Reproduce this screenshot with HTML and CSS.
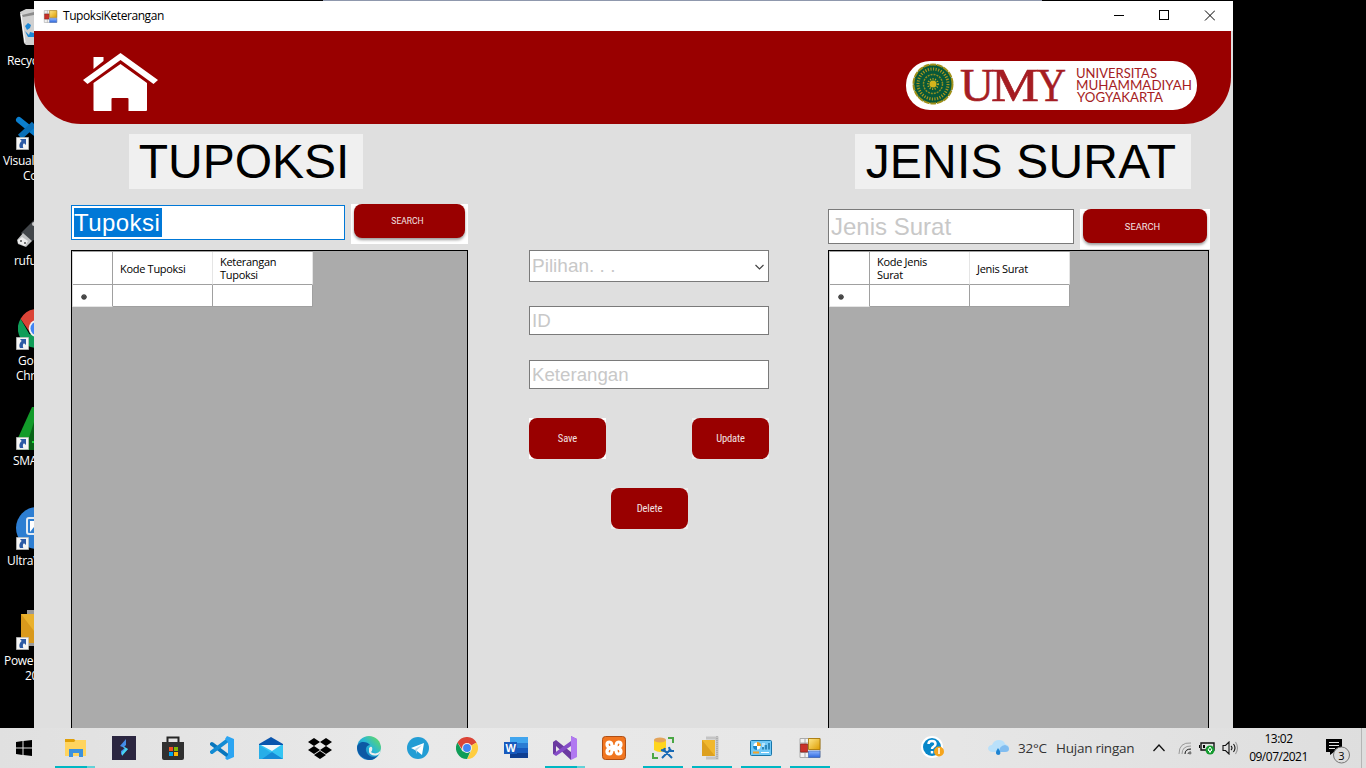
FILE: index.html
```html
<!DOCTYPE html>
<html lang="id">
<head>
<meta charset="utf-8">
<title>TupoksiKeterangan</title>
<link rel="stylesheet" href="styles.css">
</head>
<body>
<svg class="defs" width="0" height="0">
  <defs>
    <linearGradient id="gold" x1="0" y1="0" x2="1" y2="1"><stop offset="0" stop-color="#ffe88a"/><stop offset="1" stop-color="#dd9c00"/></linearGradient>
    <linearGradient id="blue" x1="0" y1="0" x2="0" y2="1"><stop offset="0" stop-color="#8db5ff"/><stop offset="1" stop-color="#2f68dd"/></linearGradient>
    <linearGradient id="edge" x1="1" y1="0" x2="0" y2="1"><stop offset="0" stop-color="#6de04e"/><stop offset=".45" stop-color="#28b7d5"/><stop offset="1" stop-color="#0d62bd"/></linearGradient>
    <symbol id="shortcut" viewBox="0 0 13 13"><path fill="#f5f5f5" stroke="#aaa" stroke-width=".6" d="M.3.3h12.4v12.4H.3z"/><path fill="#2c5aa5" d="M4 2h6v6L8 6.300C6.800 7.200 6.500 9 7.300 11H4C2.500 8 4 5.500 5.700 4z"/></symbol>
    <symbol id="form" viewBox="0 0 24 24"><path fill="#f3f3f3" stroke="#aaa" d="M2 2.500h20v19H2zM7 2v20M2 7h8M2 16.500h20"/><path fill="url(#gold)" stroke="#a97808" stroke-width=".9" d="M10.500 2.500h11.500v11h-11.500z"/><path fill="#c93129" stroke="#86201b" stroke-width=".7" d="M2.500 8H9.500v8H2.500z"/><path fill="url(#blue)" stroke="#4268b0" stroke-width=".7" d="M10.500 15h11.500v6.500h-11.500z"/></symbol>
    <symbol id="chrome" viewBox="0 0 24 24"><path fill="#db4437" d="M12 12 1.600 6A12 12 0 0 1 22.400 6z"/><path fill="#ffcd40" d="M12 12l10.400-6A12 12 0 0 1 12 24l4.500-9z"/><path fill="#0f9d58" d="M1.600 6 7 15.500 16 15 12 24A12 12 0 0 1 1.600 6z"/><path fill="#db4437" d="M1.600 6h20.800L12 7 7 14z"/><circle cx="12" cy="12" r="5.400" fill="#f3f3f3"/><circle cx="12" cy="12" r="4.300" fill="#4285f4"/></symbol>
  </defs>
</svg>

<div class="desktop">
  <div class="shortcuts">
    <div class="shortcut"><svg width="34" height="53"><path fill="#d0d0d0" d="M20 12l6-3h8v36h-8l-2-2z"/><path fill="#8c8c8c" d="M22 15l12-3v3l-11 2z"/><path fill="none" stroke="#fff" d="M21 14l4 28"/><path fill="#1b87d6" d="M25 26l3-3 3 2-1 3-3 2zM25 31l4 4 1-3 4 1v4h-6z"/></svg><span class="r1">Recyc</span></div>
    <div class="shortcut"><svg width="34" height="53"><path stroke="#0b7fcf" stroke-width="6" stroke-linecap="round" d="M19 20l16 13"/><path stroke="#096fb8" stroke-width="6" d="M20 37l14-13"/><use href="#shortcut" x="16" y="37" width="13" height="13"/></svg><span class="r2">Visual</span><span class="r2b">Co</span></div>
    <div class="shortcut"><svg width="34" height="53"><path fill="#42464a" d="M21 33l13-13v20l-5 2z"/><path fill="#bfc1c2" d="M17 40l6-7 9 8-6 6-8-3z"/><path fill="#eee" d="M18 40l4-3 6 4-3 5-7-3z"/><path fill="#777" d="M20 40h2v2h-2zM24 42h2v2h-2z"/><circle cx="34" cy="24" r="2" fill="#ccc"/></svg><span class="r3">rufu</span></div>
    <div class="shortcut"><svg width="34" height="53"><use href="#chrome" x="18" y="9" width="39" height="39"/><use href="#shortcut" x="16" y="37" width="13" height="13"/></svg><span class="r4">Go</span><span class="r4b">Chr</span></div>
    <div class="shortcut"><svg width="34" height="53"><path fill="#129b2a" d="M32 7h2v43H18V38z"/><path fill="#076417" d="M34 22v28H25z"/><path fill="#21d63d" d="M32 41h2v2h-2z"/><use href="#shortcut" x="16" y="37" width="13" height="13"/></svg><span class="r5">SMA</span></div>
    <div class="shortcut"><svg width="34" height="53"><circle cx="37" cy="28" r="21" fill="#2d7ed2"/><rect x="27" y="18" width="20" height="16" rx="2" fill="#2d7ed2" stroke="#e2ebf4" stroke-width="2"/><path fill="#fff" d="M30 21h4v6l-4 5z"/><use href="#shortcut" x="16" y="37" width="13" height="13"/></svg><span class="r1">UltraV</span></div>
    <div class="shortcut"><svg width="34" height="53"><path fill="#999" d="M27 10h7v36h-7z"/><path fill="#eab12d" d="M21 14h13v29H21z"/><path fill="#d9991c" d="M21 14l13 17v12H21z"/><use href="#shortcut" x="16" y="37" width="13" height="13"/></svg><span class="r7">Powe</span><span class="r7b">20</span></div>
  </div>

  <main class="window">
    <div class="titlebar">
      <svg width="15" height="15"><use href="#form" width="15" height="15"/></svg>
      <span>TupoksiKeterangan</span>
      <svg class="controls" width="104" height="30" fill="none" stroke="#000" shape-rendering="crispEdges"><path d="M3 14.500h10M48.500 9.500h9v9h-9z"/><path shape-rendering="auto" d="M94 9.500l10 10M104 9.500l-10 10"/></svg>
    </div>
    <header class="banner">
      <svg class="home" width="76" height="60" viewBox=".5 0 76 60" fill="#fff"><path d="M11 4h10v4l-10 8zM38 0l37.500 27-4.500 4L38 7 5 31l-4.500-4z"/><path d="M38 11l26.500 19v27q0 1-1 1H46V46q0-1-1-1H30q-1 0-1 1v12H12q-1 0-1-1V30z"/></svg>
      <div class="logo">
        <svg width="291" height="48">
          <circle cx="27" cy="23" r="19.500" fill="#075839" stroke="#a09018" stroke-width="2" stroke-dasharray="6 .8"/>
          <circle cx="27" cy="23" r="15" fill="none" stroke="#a6951f" stroke-width="3" stroke-dasharray="1.200 1.400"/>
          <circle cx="27" cy="23" r="9.500" fill="none" stroke="#8f8d20" stroke-width="1.500" stroke-dasharray="2 1"/>
          <circle cx="27" cy="23" r="3.500" fill="#d5b51c"/><circle cx="27" cy="23" r="5" fill="none" stroke="#c5aa1c" stroke-width="2" stroke-dasharray="1 1.500"/>
          <g class="umy"><text x="54" y="40" textLength="34" lengthAdjust="spacingAndGlyphs">U</text><text x="85" y="40" textLength="48" lengthAdjust="spacingAndGlyphs">M</text><text x="131" y="40" textLength="29" lengthAdjust="spacingAndGlyphs">Y</text></g>
          <g class="uni"><text x="170" y="17" textLength="81" lengthAdjust="spacingAndGlyphs">UNIVERSITAS</text><text x="170" y="29" textLength="116" lengthAdjust="spacingAndGlyphs">MUHAMMADIYAH</text><text x="171" y="41" textLength="86" lengthAdjust="spacingAndGlyphs">YOGYAKARTA</text></g>
        </svg>
      </div>
    </header>
    <div class="content">
      <section class="panel left">
        <h1>TUPOKSI</h1>
        <div class="search-row"><div class="field big focused"><mark>Tupoksi</mark></div><div class="search"><button>SEARCH</button></div></div>
        <div class="grid">
          <div class="table"><i></i><b>Kode Tupoksi</b><b>Keterangan<br>Tupoksi</b><i class="new"><svg width="6" height="6"><path stroke="#444" stroke-width="1.300" d="M3 0v6M0 3h6M1 1l4 4M5 1L1 5"/></svg></i><i></i><i></i></div>
        </div>
      </section>
      <section class="form">
        <div class="field select">Pilihan. . .<svg width="9" height="6" fill="none" stroke="#444" stroke-width="1.200"><path d="M.5 1l4 4 4-4"/></svg></div>
        <div class="field id">ID</div>
        <div class="field ket">Keterangan</div>
        <div class="actions"><span class="action white"><button>Save</button></span><span class="action"><button>Update</button></span></div>
        <div class="actions center"><span class="action"><button>Delete</button></span></div>
      </section>
      <section class="panel right">
        <h1>JENIS SURAT</h1>
        <div class="search-row"><div class="field big">Jenis Surat</div><div class="search"><button>SEARCH</button></div></div>
        <div class="grid">
          <div class="table"><i></i><b>Kode Jenis<br>Surat</b><b>Jenis Surat</b><i class="new"><svg width="6" height="6"><path stroke="#444" stroke-width="1.300" d="M3 0v6M0 3h6M1 1l4 4M5 1L1 5"/></svg></i><i></i><i></i></div>
        </div>
      </section>
    </div>
  </main>
  <div class="behind"></div>
</div>

<footer class="taskbar">
  <div class="start"><svg width="16" height="16"><path d="M0 2l6.500-1v6.500H0zM7.500 1L16 0v7.500H7.500zM0 8.500h6.500V15L0 14zM7.500 8.500H16V16l-8.500-1z"/></svg></div>
  <div class="app running split"><svg width="24" height="24"><path fill="#e0a008" d="M2 3h9l2 2-2 3H2z"/><path fill="#ffd45e" d="M2 6h9l2-2h10v16H2z"/><path fill="#3b91dd" d="M6 13h14v8h-4v-4h-6v4H6z"/></svg></div>
  <div class="app"><svg width="24" height="24"><path fill="#2b2640" d="M0 0h24v24H0z"/><path fill="#438ce8" d="M14 3v6l-3 3 5 1-7 6v-4l4-3-5-2z"/><path fill="#48d4ef" d="M11 10l5 3-6 7v-4l3-3z"/></svg></div>
  <div class="app"><svg width="24" height="24"><path fill="none" stroke="#252525" stroke-width="2" d="M6.500 7V1.500h11V7"/><path fill="#303030" d="M1 6h22v16q0 2-2 2H3q-2 0-2-2z"/><path fill="#f25022" d="M8 11h4v4H8z"/><path fill="#7fba00" d="M13 11h4v4h-4z"/><path fill="#00a4ef" d="M8 16h4v4H8z"/><path fill="#ffb900" d="M13 16h4v4h-4z"/></svg></div>
  <div class="app"><svg width="24" height="24"><path stroke="#0876bd" stroke-width="4" stroke-linecap="round" d="M2 8l16 12"/><path stroke="#138bd3" stroke-width="4" stroke-linecap="round" d="M2 16L18 4"/><path fill="#2ca5f2" d="M17 0l7 3v18l-7 3-2-2 3-3V6l-3-3z"/></svg></div>
  <div class="app"><svg width="24" height="24"><path fill="#0a55ad" d="M0 8l12-7 12 7v3H0z"/><path fill="#35c5f3" d="M0 9h24v14H0z"/><path fill="#f5f7fa" d="M2 9h20l-9 6z"/><path fill="#27aee8" d="M0 9l22 14H0z"/><path fill="#158bd6" d="M13 16l11 7H3z"/></svg></div>
  <div class="app"><svg width="24" height="22"><path d="M6 1l6 4-6 4-6-4zM18 1l6 4-6 4-6-4zM6 9l6 4-6 4-6-4zM18 9l6 4-6 4-6-4zM12 14l6 4-6 4-6-4z"/></svg></div>
  <div class="app"><svg width="24" height="24"><circle cx="12" cy="12" r="12" fill="url(#edge)"/><path fill="#0c59a4" d="M0 12C1 4 10 5 13 9 7 10 8 17 13 20c4 2 7 0 8-1-3 5-8 6-12 4Q1 20 0 12z"/><path fill="#ededed" d="M12 12c4-4 4 3 2 4 4 3 9 1 10-3l-1 4c-3 4-10 3-11-1z"/></svg></div>
  <div class="app"><svg width="22" height="22"><circle cx="11" cy="11" r="11" fill="#239dd4"/><path fill="#fff" d="M4 11l13-5-2 12-5-4z"/><path fill="#b9d8e8" d="M8 12l7-4-5 5v4z"/></svg></div>
  <div class="app"><svg width="22" height="22"><use href="#chrome" width="22" height="22"/></svg></div>
  <div class="app"><svg width="24" height="24"><path fill="#41a5ee" d="M6 1h18v6H6z"/><path fill="#2b7cd3" d="M6 7h18v5H6z"/><path fill="#185abd" d="M6 12h18v5H6z"/><path fill="#103f91" d="M6 17h18v5H6z"/><path fill="#185abd" d="M0 6h13v12H0z"/><text x="1.500" y="16" class="w">W</text></svg></div>
  <div class="app running split"><svg width="24" height="24"><path fill="#6b3aa0" d="M0 6l3-2 15 12v8L3 10v8H0z"/><path fill="#854cc7" d="M0 18l18-13V0L24 3v3L3 20z"/><path fill="#b179f1" d="M18 0l6 3v18l-6 3z"/></svg></div>
  <div class="app"><svg width="24" height="24"><rect x=".5" y=".5" width="23" height="23" rx="3" fill="#f17620" stroke="#af4e15"/><path fill="none" stroke="#fff" stroke-width="3.200" stroke-linecap="round" stroke-linejoin="round" d="M8 12Q5 11 5 8.500T7.500 6Q10 6 10 10.500h4Q14 6 16.500 6T19 8.500 16 12q3 1 3 3.500T16.500 18Q14 18 14 13.500h-4Q10 18 7.500 18T5 15.500 8 12"/></svg></div>
  <div class="app running"><svg width="24" height="24"><path fill="#ffd51c" d="M3 4h12v10q-6 4-12 0z"/><ellipse cx="9" cy="4" rx="6" ry="2.500" fill="#e3a45b"/><path fill="none" stroke="#4aa745" stroke-width="2" d="M17 2h5v5M2 17v5h5"/><path fill="none" stroke="#1769b5" stroke-width="2" d="M11 22l9-9M12 13l9 9M10 14l3 1 1-3M18 11l1 4h4"/></svg></div>
  <div class="app running"><svg width="24" height="24"><path fill="none" stroke="#c4c4c4" stroke-width="3" d="M6 2h11v20H6"/><path stroke="#999" stroke-dasharray="1 1" d="M17 0v24"/><path fill="#f1b82e" d="M2 4h13v16H2z"/><path fill="#dda01e" d="M2 4l13 16H2z"/></svg></div>
  <div class="app running"><svg width="22" height="16"><rect x=".5" y=".5" width="21" height="15" rx="1" fill="#71c9f7" stroke="#1876aa"/><circle cx="7" cy="6" r="3.500" fill="#fff"/><path fill="#ef9b1d" d="M7 6V2a4 4 0 0 1 4 4z"/><path fill="#1785c9" d="M7 6h-4a4 4 0 0 0 4 4z"/><path stroke="#1875a9" stroke-width="1.500" d="M13 9.500V7M16 9.500V5M19 9.500V3"/><path stroke="#fff" d="M12 4h3M12 6h2"/><path stroke="#f6a329" stroke-width="2" d="M3 12.500h6"/><path stroke="#fff" d="M11 12.500h8"/></svg></div>
  <div class="app running"><svg width="24" height="24"><use href="#form" width="24" height="24"/></svg></div>

  <div class="tray">
    <svg class="help" width="24" height="24"><circle cx="11" cy="11" r="11" fill="#fff"/><circle cx="11" cy="11" r="9" fill="#0787c9"/><path fill="none" stroke="#fff" stroke-width="2.500" d="M7.500 8c0-4 7-4 7 0 0 3-3.500 2-3.500 5M11 15v2.500"/><circle cx="18" cy="15.500" r="5" fill="#f6a51d"/><path stroke="#fff" stroke-width="1.500" d="M18 12v6"/></svg>
    <svg class="cloud" width="21" height="16"><path fill="#b9e0fa" d="M4 12q-4-1-4-4 1-3 4-3 2-5 7-5 5 0 6 4 4 1 4 4 0 4-4 4z"/><path fill="#82bdf0" d="M11 12q0-6 6-7 4 1 4 4 0 3-4 3z"/><path fill="#1d83d2" d="M10 8q5 7 0 7-4-1 0-7z"/></svg>
    <span class="temp">32°C</span><span class="weather">Hujan ringan</span>
    <svg class="chev" width="12" height="8" fill="none" stroke="#111" stroke-width="1.300"><path d="M.5 7L6 1l5.500 6"/></svg>
    <svg class="wifi" width="14" height="14" fill="none" stroke="#999"><path d="M1 13Q1 1 13 2M4 13Q4 5 13 5"/><path stroke="#111" d="M7 13q0-5 6-5M10 13q0-2 3-2"/><path fill="#111" d="M11 11h2v2h-2z"/></svg>
    <svg class="battery" width="17" height="14"><path fill="none" stroke="#111" stroke-width="1.400" d="M2 2h13v7H2z"/><path d="M0 4h1v3H0zM4 4h2v3H4z"/><circle cx="11" cy="9" r="4.500" fill="#149b2f"/><path fill="none" stroke="#fff" d="M11 12V9M9 9l2-3 2 3-2 2z"/></svg>
    <svg class="sound" width="17" height="14" fill="none" stroke="#111" stroke-width="1.100"><path d="M1 4.500h2.500L7 1v12L3.500 9.500H1zM9 5q2 2 0 4M11.500 3q3 4 0 8"/><path stroke="#999" d="M13.500 1q4 6 0 12"/></svg>
    <div class="clock"><span>13:02</span><span class="date">09/07/2021</span></div>
    <svg class="notice" width="26" height="26"><path d="M0 1h16v13H8l-4 3v-3H0z"/><path stroke="#e4e4e4" d="M3 4.500h10M3 7.500h10M3 10.500h6"/><circle cx="15.500" cy="17" r="8" fill="#ddd" stroke="#777"/><text x="12.300" y="21.500">3</text></svg>
    <i class="peek"></i>
  </div>
</footer>
</body>
</html>
```
FILE: styles.css
```css
* { box-sizing: border-box; }
body { margin: 0; width: 1366px; height: 768px; overflow: hidden; background: #000; display: flex; flex-direction: column; font-family: "Liberation Sans", Arial, sans-serif; }
.defs { position: absolute; }
svg { display: block; flex: none; }
button { border: 0; padding: 0; margin: 0; background: #990000; color: #f3e4e4; font-family: Roboto, sans-serif; }
.desktop { height: 728px; display: flex; position: relative; overflow: hidden; }
.shortcuts { width: 34px; overflow: hidden; color: #fff; font: 12px/15px "Open Sans", sans-serif; letter-spacing: -.3px; }
.shortcut { height: 100px; }
.shortcut span { display: block; white-space: nowrap; }
.r1 { padding-left: 7px; } .r2 { padding-left: 3px; } .r2b { padding-left: 23px; }
.r3 { padding-left: 14px; } .r4 { padding-left: 18px; } .r4b { padding-left: 16px; }
.r5 { padding-left: 13px; } .r7 { padding-left: 4px; } .r7b { padding-left: 25px; }
.behind { position: absolute; left: 323px; top: 0; width: 719px; height: 1px; background: #8f98ad; }

.window { width: 1199px; height: 727px; margin-top: 1px; background: #dfdfdf; overflow: hidden; }
.titlebar { height: 30px; background: #fff; display: flex; align-items: center; padding: 0 18px 0 9px; font: 12px/30px "Open Sans", sans-serif; letter-spacing: -.43px; }
.titlebar span { margin-left: 5px; }
.controls { margin-left: auto; }
.banner { width: 1197px; height: 93px; background: #990000; border-radius: 0 0 47px 47px; display: flex; justify-content: space-between; padding: 22px 34px 0 49px; }
.logo { width: 291px; height: 49px; margin-top: 8px; background: #fff; border-radius: 24px; }
.umy { font: 47px "Liberation Serif", serif; fill: #a51d23; stroke: #a51d23; stroke-width: .6px; }
.uni { font: 12.500px Lato, sans-serif; fill: #a51d23; }

.content { display: flex; height: 604px; padding: 10px 0 0 37px; }
.panel { display: flex; flex-direction: column; }
.left { width: 397px; margin-right: 61px; }
.right { width: 382px; margin-left: 59px; }
h1 { margin: 0; height: 55px; font-weight: 400; font-size: 48px; line-height: 56px; background: #f0f0f0; text-align: center; white-space: nowrap; }
.left h1 { width: 234px; margin-left: 58px; padding-right: 4px; }
.right h1 { width: 336px; margin-left: 27px; padding-right: 4px; letter-spacing: .2px; }
.search-row { display: flex; justify-content: space-between; }
.left .search-row { height: 40px; margin: 15px 0 6px; }
.right .search-row { height: 40px; margin: 20px 0 1px; }
.field { background: #fff; border: 1px solid #7a7a7a; color: #c8c8c8; font-size: 18.700px; padding-left: 2px; white-space: nowrap; }
.big { font-size: 24px; line-height: 34px; height: 35px; }
.left .big { width: 274px; margin-top: 1px; line-height: 32px; }
.right .big { width: 246px; }
.focused { border-color: #0078d7; }
mark { display: inline-block; background: #0078d7; color: #fff; height: 29px; line-height: 30px; letter-spacing: .45px; margin-top: 2px; vertical-align: top; width: 88px; }
.search { background: #fff; padding-left: 3px; height: 40px; }
.left .search { width: 117px; } .right .search { width: 130px; }
.search button { display: block; height: 34px; width: 111px; border-radius: 8px; box-shadow: 0 2px 3px #9b9b9b; font-size: 8.500px; }
.right .search button { width: 124px; font-size: 9.300px; }
.left .search button { padding-right: 4px; } .right .search button { padding-right: 5px; }
.grid { flex: 1; border: 1px solid #000; border-bottom: 0; background: #ababab; }
.right .grid { width: 381px; flex: 1; }
.table { display: grid; grid-template-columns: 40px 100px 100px; grid-template-rows: 33px 22px; width: 241px; border-top: 1px solid #a0a0a0; border-left: 1px solid #d8d8d8; }
.table b, .table i { background: #fff; border-right: 1px solid #a0a0a0; border-bottom: 1px solid #a0a0a0; font-style: normal; font-weight: 400; }
.table b { font: 11px/13px "Open Sans", sans-serif; letter-spacing: -.3px; padding-left: 7px; display: flex; align-items: center; border-right-color: #e5e5e5; white-space: nowrap; }
.table .new { display: flex; align-items: center; padding: 2px 0 0 8px; border-bottom-color: #e5e5e5; }

.form { width: 240px; padding-top: 116px; }
.select { height: 32px; line-height: 30px; font-size: 19px; display: flex; align-items: center; justify-content: space-between; padding-right: 4px; }
.select svg { margin-top: 2px; }
.id { height: 29px; line-height: 28px; margin-top: 24px; }
.ket { height: 29px; line-height: 28px; margin-top: 25px; }
.actions { display: flex; justify-content: space-between; margin-top: 29px; }
.center { justify-content: center; padding-left: 1px; }
.action { background: #eee; width: 77px; height: 41px; }
.white { background: #fff; }
.action button { width: 77px; height: 41px; border-radius: 8px; font-family: "Roboto Condensed", Roboto, sans-serif; font-size: 10.500px; letter-spacing: -.1px; }

.taskbar { height: 40px; display: flex; background: linear-gradient(90deg, #e0e0e0, #e9e9e9 30%, #e6e6e6 70%, #dedede); }
.start { width: 50px; display: flex; align-items: center; padding-left: 16px; }
.app { width: 49px; height: 40px; display: flex; align-items: center; justify-content: center; }
.running { background: linear-gradient(#00b7c3, #00b7c3) 5px 38px / 40px 2px no-repeat; }
.split { background: linear-gradient(90deg, #00b7c3 80%, #62d2d8 80%) 5px 38px / 40px 2px no-repeat; }
.w { font: bold 11px "Liberation Sans", sans-serif; fill: #fff; }
.tray { flex: 1; display: flex; align-items: center; font-family: "Open Sans", sans-serif; white-space: nowrap; }
.help { margin-left: 87px; }
.cloud { margin-left: 43px; }
.temp, .weather { font-size: 13.500px; color: #333; letter-spacing: -.25px; }
.temp { width: 29px; margin-left: 9px; } .weather { width: 79px; margin-left: 9px; }
.chev { margin-left: 18px; } .wifi { margin-left: 13px; } .battery { margin-left: 7px; } .sound { margin-left: 6px; }
.clock { display: flex; flex-direction: column; align-items: center; width: 59px; margin-left: 10px; font-size: 12px; line-height: 18px; letter-spacing: -.5px; }
.notice { margin-left: 18px; margin-top: 6px; font-size: 11px; }
.peek { width: 1px; height: 40px; background: #b5b5b5; margin-left: auto; margin-right: 4px; }
```
